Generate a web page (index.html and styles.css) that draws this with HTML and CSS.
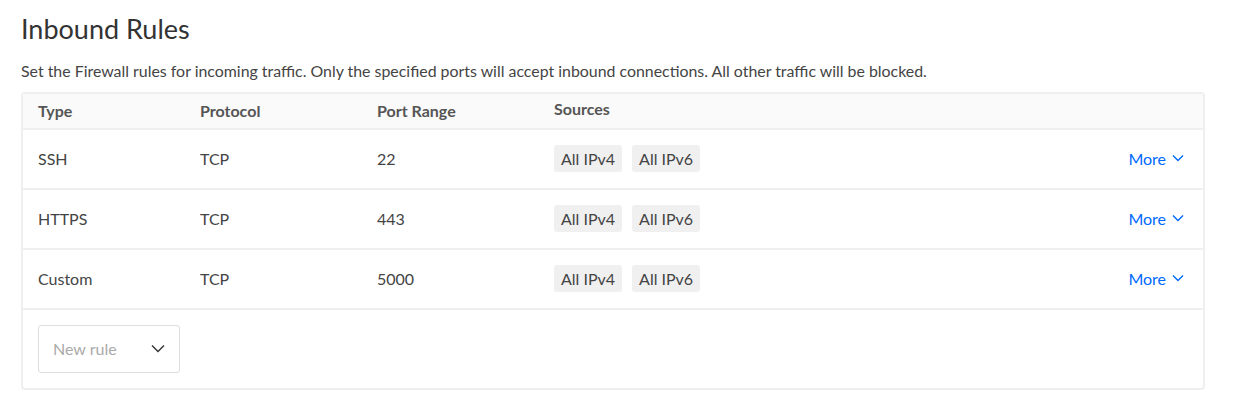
FILE: index.html
```
<!DOCTYPE html>
<html>
<head>
<meta charset="utf-8">
<link rel="stylesheet" href="styles.css">
</head>
<body>
<div class="page">
  <h1 class="title">Inbound Rules</h1>
  <p class="desc">Set the Firewall rules for incoming traffic. Only the specified ports will accept inbound connections. All other traffic will be blocked.</p>
  <div class="table">
    <div class="row head">
      <div class="c type">Type</div>
      <div class="c proto">Protocol</div>
      <div class="c port">Port Range</div>
      <div class="c src src-head">Sources</div>
    </div>
    <div class="row">
      <div class="c type">SSH</div>
      <div class="c proto">TCP</div>
      <div class="c port">22</div>
      <div class="c src"><span class="tag">All IPv4</span><span class="tag">All IPv6</span></div>
      <div class="c more">More <svg class="chev" width="12" height="8" viewBox="0 0 12 8"><path d="M1 1.5 L6 6.5 L11 1.5" fill="none" stroke="currentColor" stroke-width="1.4"/></svg></div>
    </div>
    <div class="row">
      <div class="c type">HTTPS</div>
      <div class="c proto">TCP</div>
      <div class="c port">443</div>
      <div class="c src"><span class="tag">All IPv4</span><span class="tag">All IPv6</span></div>
      <div class="c more">More <svg class="chev" width="12" height="8" viewBox="0 0 12 8"><path d="M1 1.5 L6 6.5 L11 1.5" fill="none" stroke="currentColor" stroke-width="1.4"/></svg></div>
    </div>
    <div class="row">
      <div class="c type">Custom</div>
      <div class="c proto">TCP</div>
      <div class="c port">5000</div>
      <div class="c src"><span class="tag">All IPv4</span><span class="tag">All IPv6</span></div>
      <div class="c more">More <svg class="chev" width="12" height="8" viewBox="0 0 12 8"><path d="M1 1.5 L6 6.5 L11 1.5" fill="none" stroke="currentColor" stroke-width="1.4"/></svg></div>
    </div>
    <div class="foot">
      <div class="select">
        <span class="ph">New rule</span>
        <svg class="sel-chev" width="14" height="9" viewBox="0 0 14 9"><path d="M1 1.5 L7 7.5 L13 1.5" fill="none" stroke="#333" stroke-width="1.4"/></svg>
      </div>
    </div>
  </div>
</div>
</body>
</html>
```
FILE: styles.css
```
html, body {
  margin: 0;
  padding: 0;
  background: #fff;
}
body {
  font-family: Lato, "Liberation Sans", sans-serif;
  color: #444;
}
.page {
  padding: 13px 30px 0 21px;
}
.title {
  margin: 0;
  font-size: 27px;
  font-weight: 400;
  color: #333;
  line-height: 32px;
}
.desc {
  margin: 16px 0 0 0;
  font-size: 15.9px;
  line-height: 20px;
  color: #444;
}
.table {
  margin-top: 11px;
  border: 2px solid #efefef;
  border-radius: 4px;
  width: 1180px;
}
.row {
  display: flex;
  align-items: center;
  box-sizing: border-box;
  height: 60px;
  padding-bottom: 2px;
  border-bottom: 2px solid #efefef;
  font-size: 16px;
  color: #444;
}
.row.head {
  height: 36px;
  padding-bottom: 1px;
  background: #fafafa;
  font-weight: 700;
  color: #555;
}
.c.type { width: 162px; padding-left: 15px; }
.c.proto { width: 177px; }
.c.port { width: 177px; }
.c.src { flex: 1; display: flex; gap: 10px; }
.src-head { position: relative; top: -2px; }
.tag {
  display: inline-block;
  background: #f0f0f0;
  border-radius: 3px;
  padding: 0 7px;
  height: 27px;
  line-height: 27px;
  color: #444;
}
.more {
  color: #0069ff;
  padding-right: 19px;
  display: flex;
  align-items: center;
  gap: 6px;
}
.chev { display: block; }
.foot {
  padding: 15px;
  padding-bottom: 15px;
}
.select {
  width: 142px;
  height: 48px;
  border: 1px solid #ddd;
  border-radius: 3px;
  display: flex;
  align-items: center;
  justify-content: space-between;
  padding: 0 14px 1px 14px;
  box-sizing: border-box;
}
.ph { color: #aaa; font-size: 16px; }
```
